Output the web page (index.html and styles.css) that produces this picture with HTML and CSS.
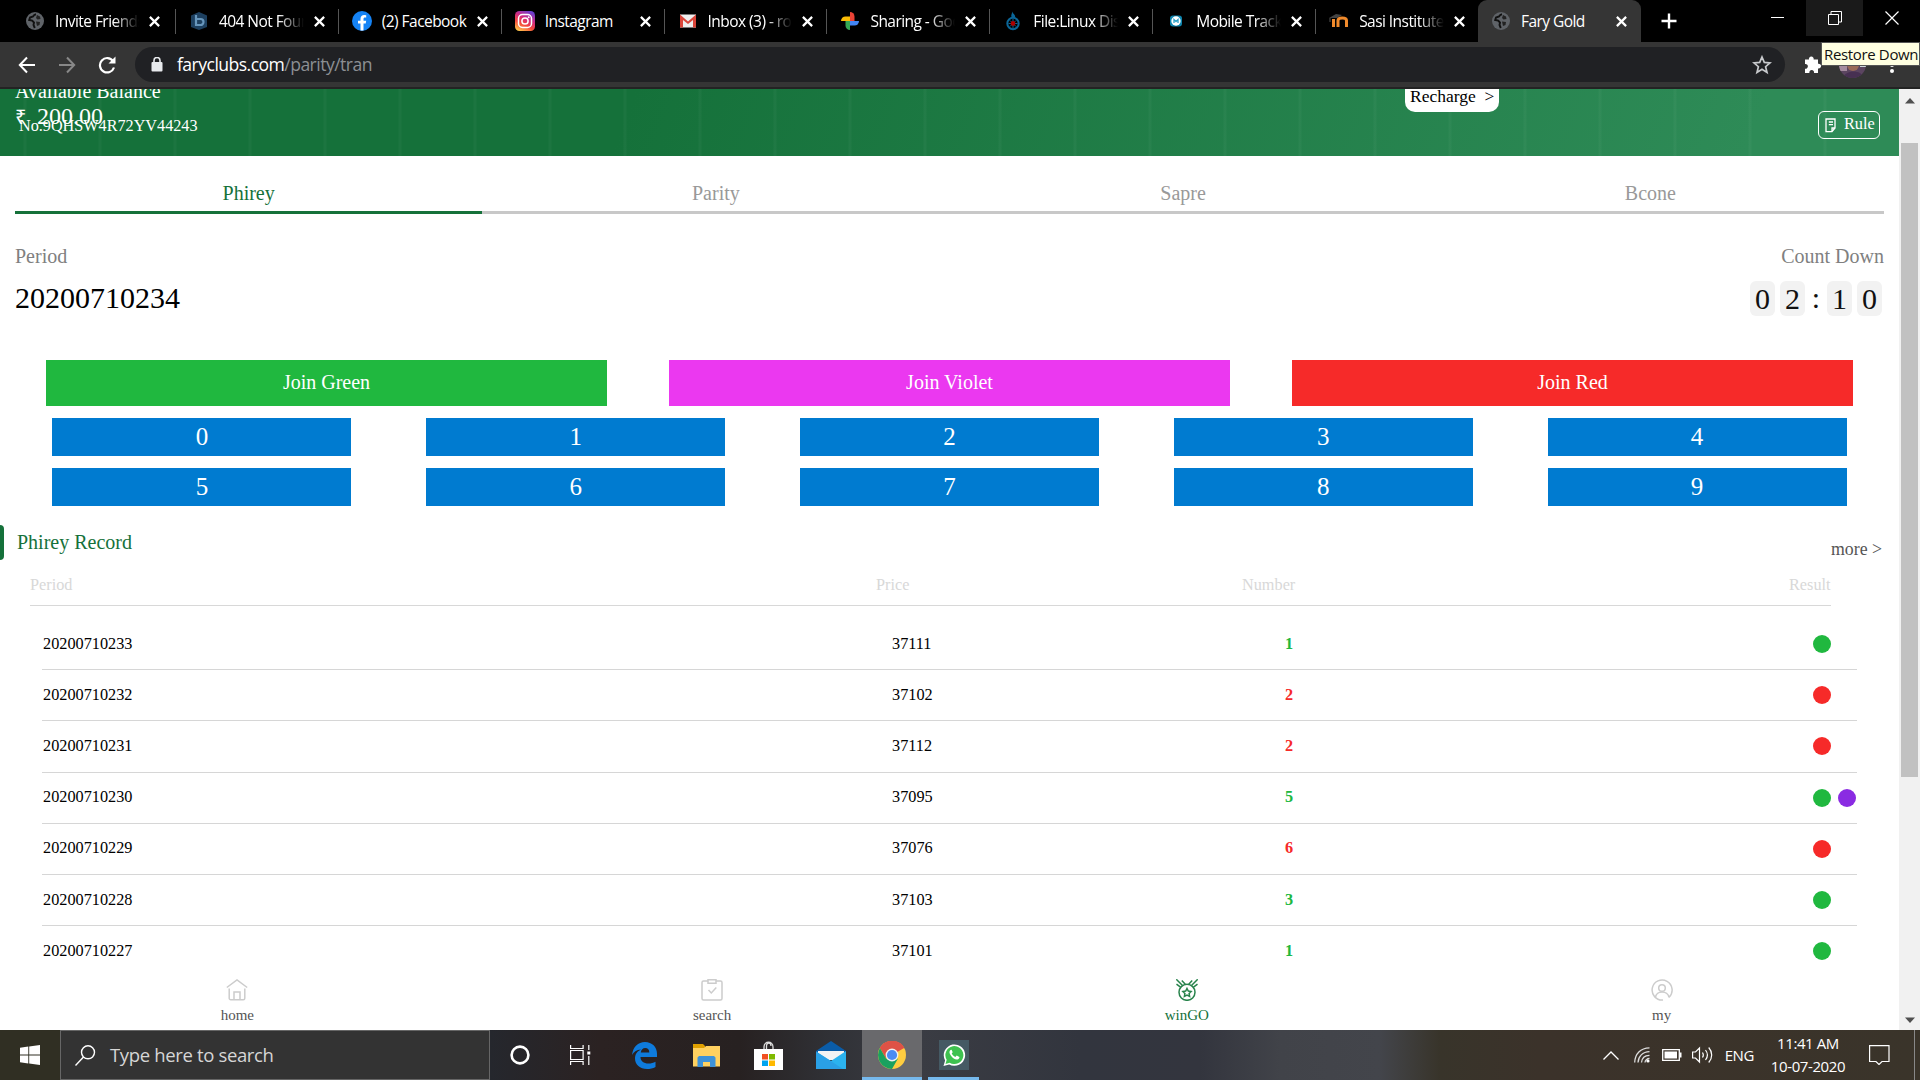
FILE: index.html
```html
<!DOCTYPE html>
<html lang="en">
<head>
<meta charset="utf-8">
<title>Fary Gold</title>
<link rel="stylesheet" href="styles.css">
</head>
<body>
<svg width="0" height="0" class="defs">
  <symbol id="globe" viewBox="0 0 18 18"><circle cx="9" cy="9" r="9" fill="#5f6368"/><path d="M10 2.200c-1.500.3-2.300 1-3 2.300L4 5.500 3.200 8l3 .6 1.800 2-.5 2.400 1.300 3" fill="none" stroke="#111" stroke-width="1.900"/><path d="M11 3l3 1.500.5 2.500-3 .5L10 6zM10 9.500l4 .5-.5 3-2.500 1z" fill="#222"/></symbol>
  <symbol id="close" viewBox="0 0 10 10"><path d="M.8.8l8.400 8.400M9.200.8L.8 9.200" stroke="#fff" stroke-width="2" fill="none"/></symbol>
</svg>

<header class="tabs">
  <div class="tab"><svg class="fav"><use href="#globe"/></svg><span>Invite Friends</span><svg class="x"><use href="#close"/></svg></div>
  <div class="tab"><svg class="fav" viewBox="0 0 18 18"><path d="M9 0l8 3.500V15l-8 3-8-3V3.500z" fill="#1d4060"/><path d="M6 3v10h4.500a2.800 2.800 0 000-6H6" fill="none" stroke="#6796bc" stroke-width="2.200"/></svg><span>404 Not Found</span><svg class="x"><use href="#close"/></svg></div>
  <div class="tab"><svg class="fav big" viewBox="0 0 20 20"><circle cx="10" cy="10" r="10" fill="#1583f5"/><path d="M8.500 19.500V12.500H6V9.800h2.500V8c0-2.600 1.500-3.900 3.700-3.900l2 .2v2.300h-1.200c-1.200 0-1.500.7-1.500 1.500v1.700h2.700l-.5 2.700h-2.200v7z" fill="#fff"/></svg><span>(2) Facebook</span><svg class="x"><use href="#close"/></svg></div>
  <div class="tab"><svg class="fav big" viewBox="0 0 20 20"><defs><linearGradient id="ig" x1="0.2" y1="1" x2="0.700" y2="0"><stop offset="0" stop-color="#fec84b"/><stop offset=".35" stop-color="#f5483b"/><stop offset=".65" stop-color="#d02b82"/><stop offset="1" stop-color="#6b3fd0"/></linearGradient></defs><rect width="20" height="20" rx="4.500" fill="url(#ig)"/><rect x="3.500" y="3.500" width="13" height="13" rx="4" fill="none" stroke="#fff" stroke-width="1.500"/><circle cx="10" cy="10" r="3.100" fill="none" stroke="#fff" stroke-width="1.500"/><circle cx="13.700" cy="6.300" r="1" fill="#fff"/></svg><span>Instagram</span><svg class="x"><use href="#close"/></svg></div>
  <div class="tab"><svg class="fav" viewBox="0 0 18 18"><path d="M1 2.500h16v13H1z" fill="#eee"/><path d="M1 2.500l8 7 8-7v13h-3V8l-5 4-5-4v7.500H1z" fill="#d9453a"/></svg><span>Inbox (3) - romeo</span><svg class="x"><use href="#close"/></svg></div>
  <div class="tab"><svg class="fav" viewBox="0 0 18 18"><path d="M9 9V0a4.500 4.500 0 014.500 4.500V9z" fill="#ea4335"/><path d="M9 9h9a4.500 4.500 0 01-4.500 4.500H9z" fill="#4285f4"/><path d="M9 9v9a4.500 4.500 0 01-4.500-4.500V9z" fill="#34a853"/><path d="M9 9H0a4.500 4.500 0 014.500-4.500H9z" fill="#fbbc04"/></svg><span>Sharing - Google</span><svg class="x"><use href="#close"/></svg></div>
  <div class="tab"><svg class="fav" viewBox="0 0 18 18"><path d="M8-.5c.5 2-1.500 3.500-.5 6h3.500C12 3 9 2 8-.5z" fill="#0b6698"/><circle cx="9" cy="11.500" r="5.700" fill="none" stroke="#0b6698" stroke-width="2"/><path d="M9 7v9M4.500 11.500h9M6 8.500l6 6M12 8.500l-6 6" stroke="#0b6698" stroke-width="1"/><circle cx="9" cy="11.500" r="2.400" fill="#a00"/></svg><span>File:Linux Distribution</span><svg class="x"><use href="#close"/></svg></div>
  <div class="tab"><svg class="fav" viewBox="0 0 18 18"><rect x="3" y="3.500" width="12" height="11" rx="3" fill="#0e84ad"/><circle cx="9" cy="9" r="4.700" fill="#fff"/><path d="M7 11V7.500l2 2 2-2V11" fill="none" stroke="#2aa0c8" stroke-width="1.300"/></svg><span>Mobile Tracker</span><svg class="x"><use href="#close"/></svg></div>
  <div class="tab"><svg class="fav big" viewBox="0 0 20 20"><path d="M0 7l7-4 6 1-5 3z" fill="#444"/><path d="M1 7v4" stroke="#555"/><path d="M4.500 16V8M9 16v-6.500c0-3.500 8.500-3.500 8.500 0V16" fill="none" stroke="#f08a2c" stroke-width="3"/></svg><span>Sasi Institute of</span><svg class="x"><use href="#close"/></svg></div>
  <div class="tab active"><svg class="fav"><use href="#globe"/></svg><span>Fary Gold</span><svg class="x"><use href="#close"/></svg></div>
  <svg class="plus" viewBox="0 0 16 16"><path d="M8 0.500v15M.5 8h15" stroke="#fff" stroke-width="2.400"/></svg>
  <div class="winbtns">
    <div><svg width="14" height="14"><path d="M0 6.500h13" stroke="#fff"/></svg></div>
    <div class="hover"><svg width="14" height="14" fill="none" stroke="#fff"><path d="M.5 3.500h10v10H.5zM3 3V.5h10.500V11H11"/></svg></div>
    <div><svg width="14" height="14"><path d="M.5.5l13 13M13.500.5l-13 13" stroke="#fff" stroke-width="1.200"/></svg></div>
  </div>
</header>

<div class="toolbar">
  <svg class="nav-ic" viewBox="0 0 18 18"><path d="M17 9H2M9 1.500L1.800 9 9 16.500" fill="none" stroke="#fff" stroke-width="2"/></svg>
  <svg class="nav-ic" viewBox="0 0 18 18"><path d="M1 9h15M9 1.500L16.200 9 9 16.500" fill="none" stroke="#888" stroke-width="2"/></svg>
  <svg class="nav-ic" viewBox="0 0 18 18"><path d="M15 5A7.200 7.200 0 1016 11.500" fill="none" stroke="#fff" stroke-width="2.200"/><path d="M17.500.5v7h-7z" fill="#fff"/></svg>
  <div class="omnibox">
    <svg width="12" height="15" viewBox="0 0 12 15"><rect x=".5" y="5" width="11" height="9.500" rx="1" fill="#e8eaed"/><path d="M3 6V3.500a3 3 0 016 0V6" fill="none" stroke="#e8eaed" stroke-width="1.600"/></svg>
    <div class="url">faryclubs.com<i>/parity/tran</i></div>
    <svg class="star" viewBox="0 0 20 20"><path d="M10 2l2.300 5.400 5.700.5-4.400 3.800 1.400 5.700-5-3.100-5 3.100 1.400-5.700L2 7.900l5.700-.5z" fill="none" stroke="#c8cacd" stroke-width="1.700"/></svg>
  </div>
  <svg class="puzzle" viewBox="0 0 18 18"><path d="M1 4h4a2.400 2.400 0 114.600 0H14v4.300a2.400 2.400 0 110 4.600v4.600h-4a2.400 2.400 0 10-4.600 0H1v-4.300a2.400 2.400 0 100-4.700z" fill="#fff"/></svg>
  <svg class="avatar" viewBox="0 0 27 27"><defs><clipPath id="av"><circle cx="13.500" cy="13.500" r="13.500"/></clipPath></defs><g clip-path="url(#av)"><rect width="27" height="27" fill="#5b4560"/><rect width="8" height="20" fill="#a58c9f"/><circle cx="14" cy="14" r="6" fill="#9a6a58"/><path d="M4 27c2-8 18-9 21 0z" fill="#473052"/><rect x="21" y="8" width="6" height="8" fill="#cfd8dc"/></g></svg>
  <svg class="menu" viewBox="0 0 4 18"><circle cx="2" cy="3" r="2" fill="#fff"/><circle cx="2" cy="9" r="2" fill="#fff"/><circle cx="2" cy="15" r="2" fill="#fff"/></svg>
  <div class="tooltip">Restore Down</div>
</div>

<div class="viewport">
<main class="page">
  <section class="hero">
    <div class="bal-label">Available Balance</div>
    <div class="bal"><span>₹</span>200.00</div>
    <div class="user-no">No.9QHSW4R72YV44243</div>
    <div class="recharge">Recharge&nbsp; &gt;</div>
    <div class="rule"><svg width="13" height="15" viewBox="0 0 13 15"><path d="M2 1h9v9L8 13.700H2zM4.800 4H9M4.800 6.700H9M8 13.500V10h3" fill="none" stroke="#fff" stroke-width="1.300"/></svg><span>Rule</span></div>
  </section>
  <nav class="games"><a class="on">Phirey</a><a>Parity</a><a>Sapre</a><a>Bcone</a></nav>
  <section class="period">
    <div><div class="cap">Period</div><div class="num">20200710234</div></div>
    <div class="right"><div class="cap">Count Down</div><div class="clock"><b>0</b><b>2</b><i>:</i><b>1</b><b>0</b></div></div>
  </section>
  <section class="join"><div><button class="green">Join Green</button></div><div><button class="violet">Join Violet</button></div><div><button class="red">Join Red</button></div></section>
  <section class="digits"><button>0</button><button>1</button><button>2</button><button>3</button><button>4</button><button>5</button><button>6</button><button>7</button><button>8</button><button>9</button></section>
  <section class="rec-head"><div class="bar"></div><h2>Phirey Record</h2><a>more &gt;</a></section>
  <div class="thead"><span>Period</span><span>Price</span><span>Number</span><span>Result</span></div>
  <div class="rows">
    <div class="row"><span>20200710233</span><span>37111</span><b class="g">1</b><em><i class="g"></i></em></div>
    <div class="row"><span>20200710232</span><span>37102</span><b class="r">2</b><em><i class="r"></i></em></div>
    <div class="row"><span>20200710231</span><span>37112</span><b class="r">2</b><em><i class="r"></i></em></div>
    <div class="row"><span>20200710230</span><span>37095</span><b class="g">5</b><em><i class="g"></i><i class="v"></i></em></div>
    <div class="row"><span>20200710229</span><span>37076</span><b class="r">6</b><em><i class="r"></i></em></div>
    <div class="row"><span>20200710228</span><span>37103</span><b class="g">3</b><em><i class="g"></i></em></div>
    <div class="row"><span>20200710227</span><span>37101</span><b class="g">1</b><em><i class="g"></i></em></div>
  </div>
  <footer class="bottom">
    <a><svg viewBox="0 0 22 22"><path d="M.8 8.500L11 .9l10.200 7.600M3.200 9.500v9.700a1.500 1.500 0 001.500 1.500h12.600a1.500 1.500 0 001.500-1.500V9.500M8 20.500v-7.500h6v7.500"/></svg>home</a>
    <a><svg viewBox="0 0 22 22"><path d="M7 2H2.500A1.500 1.500 0 001 3.500v16A1.500 1.500 0 002.500 21h17a1.500 1.500 0 001.500-1.500v-16A1.500 1.500 0 0019.500 2H15M7 .8h8v3.400H7zM7.500 11l2.800 3 5-5.500"/></svg>search</a>
    <a class="on"><svg viewBox="0 0 22 22"><circle cx="11" cy="13.300" r="8"/><path d="M.3.300l6.200 6.200M5.800 1.500L9.500 5.500M21.700.3l-6.200 6.200M16.200 1.500L12.500 5.500M.5 5.200l4 3M21.500 5.200l-4 3"/><path d="M11 9.500l1.300 2.600 2.800.4-2 2 .5 2.800-2.600-1.300-2.600 1.300.5-2.800-2-2 2.800-.4z"/></svg>winGO</a>
    <a><svg viewBox="0 0 22 22"><path d="M12 21A10 10 0 1118 18.300"/><circle cx="11" cy="9" r="3.300"/><path d="M4.500 18.500c.5-7.500 12.500-7.500 13.500 0"/></svg>my</a>
  </footer>
</main>
<aside class="scroll"><svg viewBox="0 0 10 6"><path d="M0 5.500L5 0l5 5.500z"/></svg><div class="thumb"></div><svg viewBox="0 0 10 6"><path d="M0 .5L5 6l5-5.500z"/></svg></aside>
</div>

<footer class="taskbar">
  <div class="start"><svg width="20" height="20" viewBox="0 0 20 20" fill="#fff"><path d="M0 2.800l8.300-1.200v8H0zM9.200 1.400L20 0v9.600H9.200zM0 10.400h8.300v8L0 17.200zM9.200 10.400H20V20L9.200 18.500z"/></svg></div>
  <div class="search"><svg width="21" height="21" viewBox="0 0 21 21" fill="none" stroke="#fff" stroke-width="1.400"><circle cx="13" cy="7.300" r="6.500"/><path d="M8.500 12L.5 20.500"/></svg><span>Type here to search</span></div>
  <div class="app cortana"><svg width="20" height="20"><circle cx="10" cy="10" r="8.400" fill="none" stroke="#fff" stroke-width="2.600"/></svg></div>
  <div class="app taskview"><svg width="21" height="20" viewBox="0 0 21 20" fill="none" stroke="#fff" stroke-width="1.200"><path d="M.6 0v3.500h12.500V0M.6 5.500h12.500v9H.6zM.6 20v-3.500h12.500V20M18.800 0v5M18.800 11v9"/><path d="M17.300 6.500h3v3h-3z" fill="#fff" stroke="none"/></svg></div>
  <div class="app"><svg width="25" height="27" viewBox="0 0 25 27"><path d="M0 13C1 5 6 0 13 0c7 0 12 5 12 11.500V15H8.500c0 4 3 6.500 8 6.500 2.500 0 5-.7 7-1.800v5.200c-2.500 1.500-5.500 2.100-8.500 2.100C8 27 3 22.500 3 16.500 3 12 5.500 9 9 7.500 4.500 7.700 1.500 10 0 13zm8.800-2.500h8.500C17.300 7.500 16 6 13.200 6c-2.400 0-4 1.700-4.400 4.500z" fill="#0e7bdc"/></svg></div>
  <div class="app"><svg width="27" height="23" viewBox="0 0 27 23"><path d="M0 0h10l2 2v2H0z" fill="#e0a000"/><path d="M0 4h11l2-2h14v20.500H0z" fill="#ffd160"/><path d="M4.500 23V13.500L6 12h15l1.500 1.500V23H17v-5h-7v5z" fill="#3d92d9"/></svg></div>
  <div class="app store"><svg width="29" height="29" viewBox="0 0 29 29"><path d="M10 9V6c0-6.500 9-6.500 9 0v3M12.500 9V5c0-4 4.500-4 4.500 0" fill="none" stroke="#ddd" stroke-width="1.300"/><path d="M0 8h29v21H0z" fill="#fff"/><path d="M8 13h6v5.500H8z" fill="#f25022"/><path d="M15 13h6v5.500h-6z" fill="#7fba00"/><path d="M8 19.500h6V25H8z" fill="#00a4ef"/><path d="M15 19.500h6V25h-6z" fill="#ffb900"/></svg></div>
  <div class="app"><svg width="30" height="28" viewBox="0 0 30 28"><path d="M0 10L15 0l15 10v6H0z" fill="#0a5ca8"/><path d="M2 10h26v9H2z" fill="#f4f4f4"/><path d="M0 10.500L15 20 30 10v18H0z" fill="#2bb3ef"/><path d="M0 10.500L27 28H0z" fill="#2aa0e6"/></svg></div>
  <div class="app chrome"><svg width="28" height="28" viewBox="0 0 28 28"><circle cx="14" cy="14" r="14" fill="#ffcd40"/><path d="M14 14L1.900 7A14 14 0 0126.100 7z" fill="#de5246"/><path d="M14 7h12.500A14 14 0 001.900 7L8 17.500z" fill="#de5246"/><path d="M1.900 7A14 14 0 0014 28l6-10.500L14 20l-6-2.500z" fill="#1aa15f"/><circle cx="14" cy="14" r="6.400" fill="#f1f1f1"/><circle cx="14" cy="14" r="5.100" fill="#4c8bf5"/></svg></div>
  <div class="app wa"><svg width="30" height="30" viewBox="0 0 30 30"><path d="M0 0h30v30H0z" fill="#455a64"/><path d="M4.500 26l1.600-5.600A10.700 10.700 0 1110.200 24.500z" fill="#fff"/><path d="M6.500 24l1.200-4.200a9 9 0 113 3z" fill="#3ec250"/><path d="M11.500 10c-1.500 1-1.400 3 .3 5.400 2.200 3 5.200 5 7.400 3.800 1.400-.8 1.300-2 1.200-2.200l-2.700-1.400-1.400 1.400c-1.600-.6-2.900-1.900-3.600-3.400l1-1.400L12.600 9.800z" fill="#fff"/></svg></div>
  <div class="tray">
    <svg width="16" height="9" viewBox="0 0 16 9"><path d="M.5 8.500L8 1l7.500 7.500" fill="none" stroke="#fff" stroke-width="1.300"/></svg>
    <svg class="wifi" width="16" height="16" viewBox="0 0 16 16" fill="none" stroke="#ddd" stroke-width="1.300"><path d="M.7 15.500C1 7 6.500 1 15.500.8M4 15.500C4.300 9.500 8.500 4.800 15.500 4.600M7.500 15.500C7.800 11.500 10.500 8.500 15.500 8.300M11 15.500c0-2 2-4 4.500-4"/><circle cx="14" cy="14" r="1.600" fill="#fff" stroke="none"/></svg>
    <svg width="20" height="12" viewBox="0 0 20 12"><path d="M.7.700h16.600v10.600H.700z" fill="none" stroke="#fff" stroke-width="1.300"/><path d="M2.500 2.500h12.500v7H2.500zM18 3.500h1.500v5H18z" fill="#fff"/></svg>
    <svg class="sound" width="21" height="18" viewBox="0 0 21 18" fill="none" stroke="#fff" stroke-width="1.200"><path d="M.6 6h2.900L7.500 2v14l-4-4H.6zM10.500 6.500c1 1.500 1 3.500 0 5M13.500 4c2.300 3 2.300 7 0 10M16.700 1.500c4 4.500 4 10.500 0 15"/></svg>
    <span class="eng">ENG</span>
    <div class="time"><div>11:41 AM</div><div>10-07-2020</div></div>
    <svg width="21" height="20" viewBox="0 0 21 20"><path d="M.6.600h19.400v15.900h-7l-3 3-3-3H.6z" fill="none" stroke="#fff" stroke-width="1.200"/></svg>
    <div class="peek"></div>
  </div>
</footer>
</body>
</html>
```
FILE: styles.css
```css
* { box-sizing: border-box; }
body { margin: 0; width: 1920px; height: 1080px; overflow: hidden; display: flex; flex-direction: column; background: #fff; font-family: "Liberation Serif", "Times New Roman", serif; }
svg { display: block; flex: none; }
.defs { position: absolute; }
button { border: 0; padding: 0; color: #fff; font-family: inherit; }

/* browser chrome */
.tabs { height: 42px; flex: none; display: flex; align-items: center; background: #000; padding-left: 12px; font: 15.500px "Open Sans", sans-serif; color: #fff; }
.tab { width: 162.900px; height: 42px; flex: none; display: flex; align-items: center; padding: 0 14px 0 14px; background: linear-gradient(#555, #555) right 0 top 9px / 1px 25px no-repeat; }
.tab:first-child { width: 163.900px; padding-right: 16px; }
.tab:nth-child(9) { width: 161.900px; padding-right: 13px; background: none; }
.tab span { flex: 1; margin: 0 10px 0 11px; overflow: hidden; white-space: nowrap; letter-spacing: -.55px; line-height: 22px; padding-bottom: 1px; -webkit-mask-image: linear-gradient(90deg, #000 70%, transparent 100%); mask-image: linear-gradient(90deg, #000 70%, transparent 100%); }
.tab:nth-child(3) span, .tab:nth-child(4) span, .tab.active span { -webkit-mask-image: none; mask-image: none; }
.tab.active { background: #353535; border-radius: 9px 9px 0 0; }
.fav { width: 18px; height: 18px; overflow: visible; }
.fav.big { width: 20px; height: 20px; margin: 0 -1px; }
.x { width: 11px; height: 11px; }
.plus { width: 16px; height: 16px; margin-left: 20px; }
.winbtns { margin-left: auto; display: flex; align-self: flex-start; }
.winbtns div { width: 57px; height: 36px; display: flex; align-items: center; justify-content: center; }
.winbtns .hover { background: #1a1a1a; }
.toolbar { position: relative; height: 47px; flex: none; display: flex; align-items: center; background: #353535; border-bottom: 2px solid #232323; padding-left: 18px; }
.nav-ic { width: 18px; height: 18px; margin-right: 22px; }
.omnibox { width: 1650px; height: 35px; border-radius: 18px; background: #202124; display: flex; align-items: center; padding: 0 13px 0 16px; margin-left: -3px; }
.url { flex: 1; margin-left: 14px; color: #fff; font: 17.600px/24px "Open Sans", sans-serif; padding-bottom: 1px; letter-spacing: -.55px; }
.url i { font-style: normal; color: #8c8f93; }
.star { width: 20px; height: 20px; }
.puzzle { width: 18px; height: 19px; margin-left: 19px; }
.avatar { width: 27px; height: 27px; margin-left: 17px; }
.menu { width: 4px; height: 18px; margin-left: 24px; }
.tooltip { position: absolute; left: 1821px; top: 0; width: 99px; height: 24px; background: #ffffe1; border: 1px solid #555; color: #111; font: 15px/22px "Open Sans", sans-serif; letter-spacing: -.35px; padding-left: 2px; white-space: nowrap; }

/* page */
.viewport { height: 941px; flex: none; display: flex; }
.page { width: 1899px; height: 941px; position: relative; overflow: hidden; }
.hero { position: relative; height: 67px; overflow: hidden; color: #fff; background: repeating-linear-gradient(90deg, transparent 0 23px, #ffffff08 24px 26px, transparent 27px 75px), linear-gradient(110deg, #15713a 33%, #2e8b57 92%); }
.bal-label, .bal, .user-no, .recharge, .rule { position: absolute; white-space: nowrap; }
.bal-label { left: 15px; top: -9px; font-size: 20px; line-height: 23px; }
.bal { left: 15px; top: 13px; font-size: 24px; line-height: 28px; }
.bal span { display: inline-block; width: 22px; font-size: 20px; }
.user-no { left: 19px; top: 28px; font-size: 16.200px; line-height: 18px; }
.recharge { left: 1405px; top: -10px; width: 94px; height: 33px; border-radius: 10px; background: #fff; color: #000; font-size: 17.500px; line-height: 35px; padding-left: 5px; }
.rule { left: 1818px; top: 22px; width: 62px; height: 28px; border: 1px solid #fff; border-radius: 6px; display: flex; align-items: center; gap: 7px; padding-left: 5px; font-size: 16.300px; }
.rule span { padding-bottom: 2px; }
.games { display: flex; margin: 24px 15px 0; }
.games a { flex: 1; height: 34px; text-align: center; font-size: 20px; line-height: 26px; color: #999; border-bottom: 3px solid #c8c8c8; }
.games .on { color: #15713a; border-color: #15713a; }
.period { display: flex; justify-content: space-between; height: 146px; padding: 30px 15px 0; }
.right { text-align: right; }
.cap { font-size: 20px; line-height: 24px; color: #808080; }
.num { font-size: 30px; line-height: 34px; margin-top: 13px; color: #000; }
.clock { display: flex; gap: 5px; justify-content: flex-end; padding-right: 2px; margin-top: 13px; font-size: 30px; line-height: 35px; text-align: center; color: #111; }
.clock b { width: 25px; height: 35px; border-radius: 6px; background: #f2f2f2; font-weight: 400; }
.clock i { width: 12px; font-style: normal; line-height: 33px; }
.join { display: flex; margin: 0 15px; }
.join div { flex: 1; display: flex; justify-content: center; }
.join button { width: 90%; height: 46px; font-size: 20px; padding-bottom: 2px; }
.green { background: #20b83f; }
.violet { background: #eb38f0; }
.red { background: #f62a29; }
.digits { display: grid; grid-template-columns: repeat(5, 1fr); row-gap: 12px; justify-items: center; margin: 12px 15px 0; }
.digits button { width: 80%; height: 38px; background: #007bd0; font-size: 25px; }
.rec-head { display: flex; height: 54px; padding: 19px 17px 0 0; }
.rec-head .bar { width: 4px; height: 35px; border-radius: 0 5px 5px 0; background: #15713a; }
.rec-head h2 { flex: 1; margin: 0 0 0 13px; font-size: 20px; line-height: 35px; font-weight: 400; color: #15713a; }
.rec-head a { font-size: 17.800px; line-height: 49px; color: #555; }
.thead { display: grid; grid-template-columns: 846px 366px 547px 1fr; height: 46px; margin: 0 68px 0 30px; border-bottom: 1px solid #d8d8d8; font-size: 16.250px; line-height: 51px; color: #d8d8d8; }
.rows { margin: 13px 42px 0; }
.row { display: grid; grid-template-columns: 849px 394px 528px 1fr; height: 51.200px; border-bottom: 1px solid #d6d6d6; align-items: center; font-size: 16.250px; color: #000; }
.row span { padding-left: 1px; }
.row b.g { color: #20b83f; }
.row b.r { color: #f62a29; }
.row em { display: flex; gap: 7px; }
.row i { width: 18px; height: 18px; border-radius: 50%; flex: none; }
i.g { background: #20b83f; }
i.r { background: #f62a29; }
i.v { background: #8a2be2; }
.bottom { position: absolute; left: 0; right: 0; bottom: 0; height: 62px; background: #fff; display: flex; font-size: 15px; line-height: 17px; color: #555; }
.bottom a { flex: 1; display: flex; flex-direction: column; align-items: center; gap: 6px; padding-top: 11px; }
.bottom svg { width: 22px; height: 22px; fill: none; stroke: #ccc; stroke-width: 1.500; }
.bottom .on { color: #15713a; }
.bottom .on svg { stroke: #27834b; }
.scroll { width: 21px; background: #f1f1f1; display: flex; flex-direction: column; align-items: center; justify-content: space-between; padding: 9px 0 7px; }
.scroll svg { width: 10px; height: 6px; fill: #505050; }
.thumb { width: 17px; height: 634px; background: #c1c1c1; margin: 39px 0 auto; }

/* taskbar */
.taskbar { height: 50px; flex: none; display: flex; background: linear-gradient(90deg, #302f23 0, #302f23 60px, #25272d 490px, #2b2222 600px, #272121 740px, #303136 830px, #3a3c43 920px, #32353e 1080px, #33353e 1200px, #414349 1280px, #43454b 1380px, #38342a 1440px, #3b322a 1540px, #3a342a 1920px); color: #fff; font-family: "Open Sans", sans-serif; }
.start { width: 60px; display: flex; align-items: center; justify-content: center; }
.search { width: 430px; display: flex; align-items: center; gap: 14px; padding-left: 14px; background: #333; border: 1px solid #666; font-size: 18.500px; letter-spacing: -.35px; color: #d6d6d6; }
.search span { padding-bottom: 2px; }
.app { width: 62.200px; display: flex; align-items: center; justify-content: center; flex: none; }
.cortana { margin-left: -1px; }
.taskview { padding-right: 4px; }
.store { padding-right: 1px; }
.chrome { width: 60px; background: #69696c; border-bottom: 3px solid #76b9ed; padding-top: 2px; }
.wa { width: 51px; margin-left: 6px; border-bottom: 3px solid #76b9ed; padding-top: 2px; }
.tray { margin-left: auto; display: flex; align-items: center; gap: 12px; }
.wifi { margin-left: 3px; }
.sound { margin-left: -2px; }
.eng { font-size: 15px; letter-spacing: -.4px; }
.time { width: 80px; margin: 0 9px 0 2px; text-align: center; font-size: 15px; line-height: 23px; letter-spacing: -.4px; padding-bottom: 1px; }
.peek { width: 6px; height: 50px; border-left: 1px solid #888; margin-left: 12px; }
```
